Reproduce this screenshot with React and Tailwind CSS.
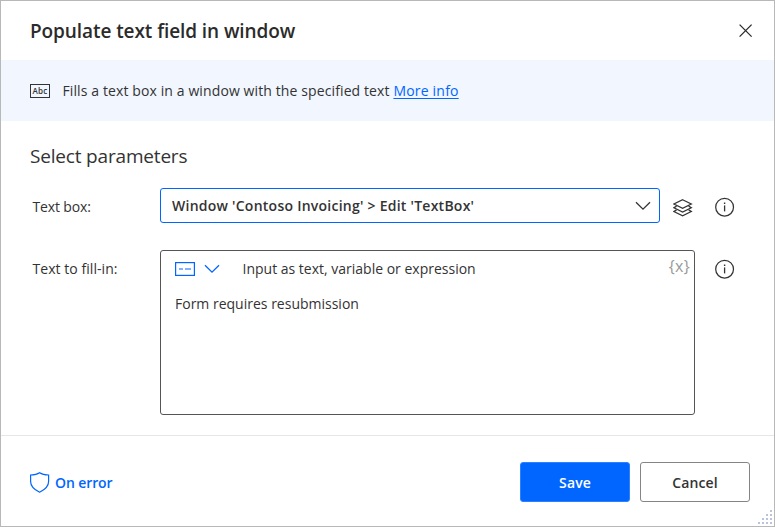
function InfoIcon() {
  return (
    <svg width="20" height="20" viewBox="0 0 20 20" fill="none" className="block shrink-0" stroke="#333333">
      <circle cx="9.6" cy="10.2" r="8.9" strokeWidth="1.25" />
      <path d="M9.6 8.4V14.4" strokeWidth="1.3" />
      <path d="M9.6 5.5V7" strokeWidth="1.4" />
    </svg>
  );
}

function Chevron({ className }) {
  return (
    <svg width="16" height="10" viewBox="0 0 16 10" fill="none" className={className}>
      <path d="M1 1.2L8 8.2L15 1.2" stroke="currentColor" strokeWidth="1.3" />
    </svg>
  );
}

function LayersIcon() {
  return (
    <svg width="20" height="18" viewBox="0 0 20 18" fill="none" className="block shrink-0" stroke="#333333" strokeWidth="1.25">
      <path d="M9.6 0.8L18.3 5L9.6 9.2L0.9 5Z" />
      <path d="M3.6 7.1L0.9 8.7L9.6 13L18.3 8.7L15.6 7.1" />
      <path d="M3.6 10.9L0.9 12.5L9.6 16.8L18.3 12.5L15.6 10.9" />
    </svg>
  );
}

export default function App() {
  return (
    <div className="flex h-[527px] w-[775px] flex-col overflow-hidden border border-[#b8b8b8] bg-white font-['Open_Sans','Noto_Sans',sans-serif] text-[14px] leading-5 whitespace-nowrap text-[#333333]">
      <header className="flex h-[59px] shrink-0 items-center justify-between pr-[21.5px] pl-[29px]">
        <h1 className="text-[19px] leading-6 font-semibold tracking-[-0.08px] text-[#2b2b2b]">Populate text field in window</h1>
        <svg width="14" height="14" viewBox="0 0 14 14" className="block" stroke="#2b2b2b" strokeWidth="1.3">
          <path d="M0.6 0.6L12.6 12.6M12.6 0.6L0.6 12.6" />
        </svg>
      </header>

      <section className="flex h-[61px] shrink-0 items-center bg-[#f1f6ff] pl-[29px]">
        <div className="flex h-[14px] w-5 items-center justify-center border border-[#333333] text-[8px] leading-none font-semibold tracking-[0.2px]">Abc</div>
        <p className="ml-[12.5px] tracking-[0.11px]">
          Fills a text box in a window with the specified text{" "}
          <a className="tracking-[0.2px] text-[#0066ff] underline underline-offset-2">More info</a>
        </p>
      </section>

      <main className="flex h-[314px] shrink-0 flex-col pl-[29px]">
        <h2 className="mt-[23px] text-[19px] leading-6 tracking-[-0.18px]">Select parameters</h2>

        <div className="mt-5 flex h-[35px] items-center">
          <span className="mt-[3px] w-[130px] pl-[2.5px] tracking-[-0.15px]">Text box:</span>
          <div className="flex h-[35px] w-[500px] items-center justify-between rounded-[3px] border border-[#0066ff] pr-2 pl-[11px]">
            <span className="font-semibold tracking-[0.25px]">Window 'Contoso Invoicing' &gt; Edit 'TextBox'</span>
            <Chevron className="block text-[#333333]" />
          </div>
          <div className="mt-[5px] ml-[13px]"><LayersIcon /></div>
          <div className="mt-[3px] ml-[22px]"><InfoIcon /></div>
        </div>

        <div className="mt-[27px] flex items-start">
          <span className="mt-[9px] w-[130px] pl-[2.5px] tracking-[0.05px]">Text to fill-in:</span>
          <div className="h-[165px] w-[535px] rounded-[3px] border border-[#555555]">
            <div className="flex h-9 items-center pr-1 pl-3.5">
              <svg width="20" height="14" viewBox="0 0 20 14" fill="none" className="block" stroke="#0066ff">
                <rect x="0.6" y="0.6" width="18.8" height="12.8" strokeWidth="1.2" />
                <path d="M4 7H8M10 7H16" strokeWidth="1.2" />
              </svg>
              <Chevron className="ml-[9px] block text-[#0066ff]" />
              <span className="ml-[22.5px]">Input as text, variable or expression</span>
              <span className="-mt-1.5 ml-auto text-[16px] tracking-[0.3px] text-[#999999]">{"{x}"}</span>
            </div>
            <p className="mt-[7px] pl-3.5">Form requires resubmission</p>
          </div>
          <div className="mt-[9px] ml-5"><InfoIcon /></div>
        </div>
      </main>

      <footer className="relative flex h-[91px] shrink-0 items-center border-t border-[#e6e6e6] pr-6 pl-[29px]">
        <button className="mt-[3px] flex items-center gap-[5px] font-semibold text-[#0066ff]">
          <svg width="20" height="21" viewBox="0 0 20 21" fill="none" className="block" stroke="currentColor" strokeWidth="1.2">
            <path d="M9.6 0.8C7.6 2.2 5.6 3 0.6 3V9.5C0.6 14.2 4.1 17.6 9.6 20.2C15.1 17.6 18.6 14.2 18.6 9.5V3C13.6 3 11.6 2.2 9.6 0.8Z" />
          </svg>
          <span className="tracking-[-0.1px]">On error</span>
        </button>
        <div className="mt-px ml-auto flex gap-2.5 font-semibold tracking-[0.1px]">
          <button className="h-10 w-[110px] rounded-[3px] border border-[#2d80ff] bg-[#0066ff] pt-0.5 text-white">Save</button>
          <button className="h-10 w-[110px] rounded-[3px] border border-[#858585] bg-white pt-0.5">Cancel</button>
        </div>
        <svg width="14" height="14" viewBox="0 0 14 14" className="absolute right-0.5 bottom-0.5" fill="#b9c4da">
          <path d="M12 0h2v2h-2zM8 4h2v2h-2zM12 4h2v2h-2zM4 8h2v2h-2zM8 8h2v2h-2zM12 8h2v2h-2zM0 12h2v2h-2zM4 12h2v2h-2zM8 12h2v2h-2zM12 12h2v2h-2z" />
        </svg>
      </footer>
    </div>
  );
}
